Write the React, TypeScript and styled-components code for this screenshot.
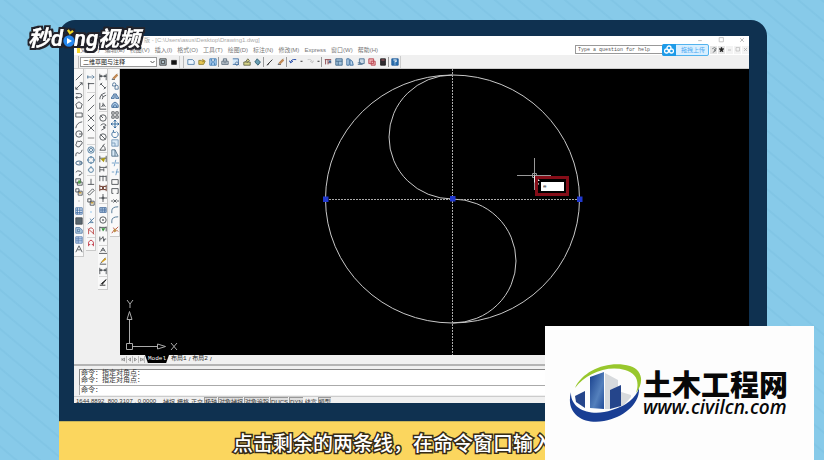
import React from "react";
import styled, { createGlobalStyle } from "styled-components";

const GlobalStyle = createGlobalStyle`
  *, *::before, *::after { box-sizing: border-box; }
  body { margin: 0; font-family: "Liberation Sans", "Noto Sans CJK SC", sans-serif; }
  button, input, select { font: inherit; color: inherit; margin: 0; padding: 0; border: 0; background: none; border-radius: 0; }
`;

const Page = styled.main`
  position: relative;
  display: flex;
  flex-direction: column;
  min-height: 100vh;
  padding: 20px 57px 0 59px;
  overflow: hidden;
  background:
    repeating-linear-gradient(40deg, rgba(70, 150, 190, 0) 0 9px, rgba(70, 150, 190, 0.09) 10px 11px, rgba(70, 150, 190, 0) 12px 15px),
    #87cae9;
`;

const Monitor = styled.section`
  flex: 1;
  display: flex;
  padding: 16px 18px 18px 15px;
  border-radius: 16px 16px 0 0;
  background: #0f3150;
`;

const AppWindow = styled.div`
  flex: 1;
  min-width: 0;
  display: flex;
  flex-direction: column;
  overflow: hidden;
  background: #f0f0f0;
  font-size: 6px;
  line-height: 8px;
`;

const TitleBar = styled.header`
  display: flex;
  align-items: center;
  height: 8px;
  padding-left: 70px;
  background: #fff;
  color: #aaa;
  white-space: nowrap;
`;

const WindowButtons = styled.div`
  display: flex;
  gap: 11px;
  margin-left: auto;
  padding-right: 2px;
  color: #999;
`;

const SmallButton = styled.button`
  display: grid;
  place-items: center;
  width: 10px;
  height: 8px;
`;

const MenuBar = styled.nav`
  display: flex;
  align-items: center;
  height: 11px;
  padding-left: 3px;
  gap: 5px;
  background: #fff;
  color: #777;
`;

const MenuItem = styled.button`
  white-space: nowrap;
`;

const MenuMark = styled.span`
  width: 3px;
  height: 6px;
  margin-right: -5px;
  background: #f6d72c;
`;

const HelpArea = styled.div`
  display: flex;
  align-items: center;
  margin-left: auto;
`;

const HelpInput = styled.input`
  width: 87px;
  height: 9px;
  padding-left: 2px;
  border: 1px solid #999;
  border-right: 0;
  background: #fff;
  color: #555;
  font-family: "Liberation Mono", monospace;
  font-size: 5px;
  &::placeholder { color: #555; opacity: 1; }
`;

const UploadButton = styled.button`
  display: flex;
  align-items: center;
  width: 47px;
  height: 12px;
  border: 1px solid #53b3ee;
  border-radius: 2px;
  background: #d8efff;
  color: #51aaf2;
  white-space: nowrap;
`;

const UploadMark = styled.span`
  display: grid;
  place-items: center;
  width: 14px;
  height: 12px;
  margin: -1px 5px -1px -1px;
  border-radius: 2px 0 0 2px;
  background: #1e9be8;
`;

const UtilityButton = styled(SmallButton)<{ $boxed?: boolean }>`
  width: 7px;
  margin-left: 1px;
  background: ${(p) => (p.$boxed ? "#e6e6e6" : "#f3f3f3")};
`;

const ToolBar = styled.div`
  display: flex;
  align-items: center;
  height: 14px;
  padding-left: 4px;
  border-bottom: 1px solid #ccc;
`;

const ToolGroup = styled.div`
  display: flex;
  align-items: center;
  height: 12px;
  padding-left: 1px;
  border-left: 1px solid #bbb;
  border-right: 1px solid #ccc;
  margin-right: 3px;
`;

const WorkspaceSelect = styled.select`
  appearance: none;
  width: 77px;
  height: 10px;
  padding-left: 2px;
  border: 1px solid #999;
  background: #fff url("data:image/svg+xml,%3Csvg xmlns='http://www.w3.org/2000/svg' width='5' height='4'%3E%3Cpath d='M.5 1l2 2 2-2' fill='none' stroke='%23555'/%3E%3C/svg%3E") no-repeat right 1px center;
  color: #222;
`;

const ToolButton = styled.button<{ $narrow?: boolean }>`
  display: grid;
  place-items: center;
  flex: none;
  width: ${(p) => (p.$narrow ? "6px" : "11px")};
  height: 10px;
`;

const Divider = styled.span`
  width: 1px;
  height: 10px;
  background: #999;
`;

const Workspace = styled.div`
  flex: 1;
  display: flex;
  min-height: 0;
`;

const ToolRail = styled.aside`
  display: flex;
  align-items: flex-start;
  gap: 2px;
  width: 46px;
  flex: none;
`;

const RailColumn = styled.div<{ $height: number }>`
  display: flex;
  flex-direction: column;
  justify-content: space-between;
  align-items: center;
  width: 10px;
  height: ${(p) => p.$height}px;
  padding: 3px 0 2px;
  border: solid #c9c9c9;
  border-width: 0 1px 1px 0;
  background: #f9f9f9;
`;

const RailButton = styled.button`
  display: grid;
  place-items: center;
  width: 9px;
  height: 9px;
`;

const RailGap = styled.span`
  width: 8px;
  height: 1px;
  background: #d5d5d5;
`;

const DrawingColumn = styled.div`
  flex: 1;
  min-width: 0;
  display: flex;
  flex-direction: column;
`;

const Canvas = styled.div`
  position: relative;
  flex: 1;
  min-height: 0;
  background: #000;
`;

const Drawing = styled.svg`
  display: block;
  width: 100%;
  height: 100%;
`;

const CommandPrompt = styled.div`
  position: absolute;
  left: 415px;
  top: 107px;
  display: flex;
  width: 34px;
  height: 20px;
  padding: 3px 2px 2px 3px;
  border: 3px solid #850d18;
`;

const PromptInput = styled.input`
  width: 100%;
  min-width: 0;
  padding-left: 2px;
  background: #fff;
  color: #222;
  font-family: "Liberation Mono", monospace;
`;

const TabRow = styled.div`
  display: flex;
  align-items: center;
  height: 8px;
  padding-left: 1px;
  color: #222;
`;

const StepButton = styled.button`
  width: 6px;
  height: 7px;
  border-right: 1px solid #bbb;
  display: grid;
  place-items: center;
`;

const LayoutTab = styled.button<{ $active?: boolean }>`
  height: 8px;
  padding: 0 ${(p) => (p.$active ? "3px" : "2px")};
  white-space: nowrap;
  background: ${(p) => (p.$active ? "#000" : "none")};
  color: ${(p) => (p.$active ? "#fff" : "#222")};
  clip-path: ${(p) => (p.$active ? "polygon(0 0, 100% 0, 88% 100%, 12% 100%)" : "none")};
  font-family: "Liberation Mono", "Noto Sans CJK SC", monospace;
`;

const CommandPanel = styled.section`
  margin-top: 1px;
  padding: 3px 0 1px 5px;
  border-top: 2px solid #b4b4b4;
  color: #333;
  font-family: "Liberation Mono", "Noto Sans CJK SC", monospace;
  font-size: 7px;
  line-height: 7px;
`;

const CommandLog = styled.div`
  padding: 0 0 1px 1px;
  border: solid #888;
  border-width: 1px 0 0 1px;
  background: #fff;
`;

const CommandLine = styled.label`
  display: flex;
  align-items: center;
  height: 10px;
  padding-left: 1px;
  border: solid #aaa;
  border-width: 1px 0 0 1px;
  background: #fff;
`;

const CommandInput = styled.input`
  flex: 1;
  min-width: 0;
  height: 7px;
`;

const StatusBar = styled.footer`
  display: flex;
  align-items: flex-start;
  height: 7px;
  overflow: hidden;
  padding-left: 2px;
  border-top: 1px solid #ccc;
  color: #333;
  white-space: nowrap;
  gap: 1px;
`;

const Coordinates = styled.span`
  width: 85px;
`;

const StatusToggle = styled.button<{ $on?: boolean }>`
  flex: none;
  height: 9px;
  border: solid ${(p) => (p.$on ? "#999" : "#f0f0f0")};
  border-width: 1px 0 0 1px;
  background: ${(p) => (p.$on ? "#dedede" : "none")};
`;

const Caption = styled.p`
  margin: 0;
  height: 39px;
  padding-left: 174px;
  border-top: 1px solid #c6b45b;
  background: #fbd65e;
  color: #fff;
  font-family: "Noto Sans CJK SC", sans-serif;
  font-size: 20px;
  font-weight: 500;
  line-height: 41px;
  white-space: nowrap;
  -webkit-text-stroke: 3px #352a16;
  paint-order: stroke fill;
`;

const VideoLogo = styled.svg`
  position: absolute;
  left: 16px;
  top: 12px;
`;

const SiteCard = styled.aside`
  position: absolute;
  right: 10px;
  bottom: 0;
  display: flex;
  align-items: center;
  width: 269px;
  height: 134px;
  padding-left: 23px;
  background: #fdfdfd;
`;

const SiteLink = styled.a`
  display: flex;
  align-items: center;
  text-decoration: none;
`;

const SiteWords = styled.span`
  display: flex;
  flex-direction: column;
  color: #080808;
  white-space: nowrap;
`;

const SiteName = styled.strong`
  font-family: "Noto Sans CJK SC", sans-serif;
  font-size: 29px;
  font-weight: 900;
  line-height: 28px;
`;

const SiteAddress = styled.span`
  font-family: "Open Sans", "Noto Sans", sans-serif;
  font-size: 19px;
  font-style: italic;
  font-weight: 600;
  line-height: 20px;
`;

type GlyphShape = { d: string; fill?: string; stroke?: string; extra?: string; extraColor?: string };

const glyphs: Record<string, GlyphShape> = {
  line: { d: "M1 9 9 1" },
  ray: { d: "M1 9 9 1M1 9V6M1 9h3M9 1v3M9 1H6" },
  arcLine: { d: "M1 2h5a2.5 2.5 0 0 1 0 5H1M1 7l2-2M1 7l2 2" },
  polygon: { d: "M5 1 9 4 7.5 9h-5L1 4Z" },
  rect: { d: "M1 2.5h8v5H1Z" },
  arc: { d: "M1 9Q2 2 9 1" },
  circle: { d: "M9 5A4 4 0 1 1 5 1a4 4 0 0 1 4 4M5 5h4" },
  cloud: { d: "M2 8Q0 6 2 4 2 0 5 2 8 0 9 3 9 6 7 6 6 10 2 8" },
  spline: { d: "M1 9Q1 3 4 5T9 1" },
  ellipse: { d: "M9 5A4 2.5 0 1 1 1 5a4 2.5 0 0 1 8 0M5 5h4", stroke: "#31597b" },
  ellipseArc: { d: "M1 4Q3 1 7 3 11 6 5 8M5 8l2-2" },
  insert: { d: "M1 1h6v5H1ZM3 5h6v4H3Z", extra: "M4 3h3v4H4Z", extraColor: "#4fa343" },
  block: { d: "M1 1h4v4H1ZM4 4h5v5H4Z", extra: "M5 5h3v2H5Z", extraColor: "#c19d43" },
  point: { d: "M4.5 5h1" },
  hatch: { d: "M1 1h8v8H1ZM1 4h8M1 7h8M3 1v8M6 1v8", stroke: "#4773aa" },
  gradient: { d: "M1 1h8v8H1Z", fill: "#596770" },
  region: { d: "M1 2h5l3 3v4H1ZM3 4h3v3H3Z", fill: "#b9d5e8", stroke: "#5579a3" },
  table: { d: "M1 1h8v8H1ZM1 3.5h8M1 6h8M4 1v8", fill: "#c5daf5", stroke: "#5c7fb1" },
  text: { d: "M1 9 5 1 9 9M3 6h4" },
  track: { d: "M0 5h6M1 3v4M6 3l3 2-3 2", stroke: "#537896" },
  corner: { d: "M2 9V2h7M1 2h2M2 1v2" },
  cross: { d: "M1 1l8 8M9 1 1 9" },
  dash: { d: "M1 5h8", stroke: "#777" },
  target: { d: "M9 5a4 4 0 1 1-8 0 4 4 0 0 1 8 0M7 5a2 2 0 1 1-4 0 2 2 0 0 1 4 0", stroke: "#48779c" },
  quad: { d: "M9 5a4 4 0 1 1-8 0 4 4 0 0 1 8 0M5 0v3M5 7v3M0 5h3M7 5h3", stroke: "#48779c" },
  tangent: { d: "M8 5a3 3 0 1 1-6 0 3 3 0 0 1 6 0M5 0v2M1 5h1", stroke: "#48779c" },
  perp: { d: "M1 8h8M5 8V1" },
  parallel: { d: "M1 7 7 1M3 9 9 3M1 7l2 2M7 1l2 2" },
  node: { d: "M4 5h2", stroke: "#70b5e9" },
  near: { d: "M1 9 9 1M4 2l3 5M3 7h5", stroke: "#547da0" },
  none: { d: "M2 9V3q3-4 6 0v6M1 2l8 7", stroke: "#b44" },
  magnet: { d: "M2 9V4q3-5 6 0v5M2 7h2M6 7h2", stroke: "#bd2f3d" },
  dimension: { d: "M1 1v8M9 1v8M1 4h8M1 4l2-1v2ZM9 4 7 3v2Z" },
  aligned: { d: "M2 2l6 6M1 4l3-3M6 9l3-3" },
  arcDim: { d: "M1 9Q1 3 8 1M4 9q0-4 5-5M3 3l2 3" },
  ordinate: { d: "M1 1v8h8M3 6l3-3 2 3M5 1v5" },
  radius: { d: "M9 5a4 4 0 1 1-8 0 4 4 0 0 1 8 0M5 5 2 2" },
  jog: { d: "M2 3q4-4 7 0L5 5l3 1-5 3" },
  diameter: { d: "M9 5a4 4 0 1 1-8 0 4 4 0 0 1 8 0M2 2l6 6" },
  angle: { d: "M8 9H1L7 1M5 3q3 2 3 6" },
  quick: { d: "M1 1v8M9 1v8M1 4h8", extra: "M2 5l6-2-2 6Z", extraColor: "#ac9b12" },
  baseline: { d: "M1 1v8M1 3h8M1 6h5M9 1v3M6 4v4" },
  continued: { d: "M1 2v7M5 2v7M9 2v7M1 3h8" },
  space: { d: "M1 1v8M9 1v8M1 3h8M1 7h8M3 3l4 4M3 7l4-4", stroke: "#653326" },
  center: { d: "M5 0v10M0 5h10M4 4h2v2H4Z" },
  tolerance: { d: "M1 2h8v6H1ZM1 5h8M4 2v6M7 2v6", fill: "#a9c3de", stroke: "#5578a4" },
  centerMark: { d: "M9 5a4 4 0 1 1-8 0 4 4 0 0 1 8 0M5 4v2M4 5h2" },
  inspect: { d: "M1 2v6M9 2v6M1 3h8", extra: "M3 4h5L5 8Z", extraColor: "#31943a" },
  jogLine: { d: "M1 2v6M1 5h2l2-3 1 6 1-3h2" },
  dimEdit: { d: "M2 6 5 1l3 5M3 4h4M0 8h10" },
  edit: { d: "M1 9h8M2 8 8 1", extra: "M3 6 8 1l1 2-5 4Z", extraColor: "#d5a020" },
  brushDark: { d: "M1 9h7M3 7l1 1 5-6Z", fill: "#222", stroke: "#222" },
  erase: { d: "M2 7 8 1M1 8h4", extra: "M2 6 7 1l2 2-5 5Z", extraColor: "#c28a55" },
  copy: { d: "M2 3a2 2 0 1 1 4 0v2H2ZM5 6a2 2 0 1 1 4 0v3H5Z", stroke: "#4d7296" },
  mirror: { d: "M4 2v6H0ZM6 2v6h4Z", fill: "#a9c8e5", stroke: "#426a97" },
  offset: { d: "M1 8V5q4-7 8 0v3ZM3 8V6q2-3 4 0v2", fill: "#a9c8e5", stroke: "#426a97" },
  array: { d: "M1 1h3v3H1ZM6 1h3v3H6ZM1 6h3v3H1ZM6 6h3v3H6Z" },
  move: { d: "M5 0v10M0 5h10M3.5 2 5 0l1.5 2M3.5 8 5 10 6.5 8M2 3.5 0 5l2 1.5M8 3.5 10 5 8 6.5", stroke: "#246095" },
  rotate: { d: "M3 2a4 4 0 1 0 4 0M3 0v3h3", stroke: "#386b9b" },
  scale: { d: "M1 1h8v8H1ZM1 5h4v4", fill: "#d9e9f6", stroke: "#7799b8" },
  stretch: { d: "M1 1h4v8H1ZM5 1l4 8H5", fill: "#d9e9f6", stroke: "#526f87" },
  trim: { d: "M1 5h3M6 5h4M6 1 4 9", stroke: "#6799c4" },
  extend: { d: "M1 5h3M6 5h4M8 1 6 9", stroke: "#6799c4" },
  breakRect: { d: "M3 8H1V2h8v6H7" },
  breakPoint: { d: "M1 2h8v6H1Z" },
  join: { d: "M0 5h3M7 5h3M3 3l2 2-2 2M7 3 5 5l2 2" },
  fillet: { d: "M1 9V6q0-5 8-5", stroke: "#446d8d" },
  explode: { d: "M1 9 4 5M5 5 9 1M3 2l3 5M7 5l2 2", stroke: "#b64934", extra: "M3 5l3-2 1 3-3 2Z", extraColor: "#bd9448" },
  gear: { d: "M1 1h8v8H1ZM3 3h4v4H3Z", fill: "#aebfc9", stroke: "#444" },
  save2: { d: "M2 3h6v5H2Z", fill: "#111", stroke: "#333" },
  sheet: { d: "M1 2h6l2 2v4H1Z", fill: "#eef7ff", stroke: "#527ea8" },
  open: { d: "M1 3h3l1 1h4L7 8H1Z", fill: "#e6c652", stroke: "#8d8238", extra: "M5 1l4 2-3 3Z", extraColor: "#b0902c" },
  disk: { d: "M1 1h8v8H1ZM3 1v3h4V1M3 9V6h4v3", fill: "#b9dbfa", stroke: "#417cb3" },
  print: { d: "M3 4V1h4v3M1 4h8v4H1ZM3 6h4", fill: "#c6ced6", stroke: "#5d6d7c" },
  preview: { d: "M1 1h7v7H1M6 5a2 2 0 1 0 .1 0M8 8l1 1", fill: "#d4e8f8", stroke: "#436fa0" },
  plot: { d: "M1 5h8v4H1ZM3 5l3-4 2 2-3 3", fill: "#d7d487", stroke: "#65664a" },
  web: { d: "M1 5l3-4 4 4-3 4Z", fill: "#689eb3", stroke: "#315d6e" },
  pencil: { d: "M2 8 8 2M1 9l3-2", stroke: "#222" },
  undo: { d: "M2 6q0-5 7-4M2 6 0 3M2 6l3-2", stroke: "#143da2" },
  redo: { d: "M8 6Q8 1 2 2M8 6l2-3M8 6 5 4", stroke: "#c4c4c4" },
  drop: { d: "M3 4h4L5 6Z", fill: "#555", stroke: "#555" },
  match: { d: "M1 2h8M2 2v6M5 2v6M5 6h4", stroke: "#873f45", extra: "M6 3h3v3H6Z", extraColor: "#416896" },
  palette: { d: "M1 1h8v8H1ZM1 4h8M4 4v5", fill: "#a5c4dd", stroke: "#406789" },
  design: { d: "M1 1h3v8H1ZM5 2q4 1 4 7H5Z", fill: "#bdd7ed", stroke: "#396b9c" },
  sheetSet: { d: "M3 1h6v6H3ZM1 8h6M1 6h4", fill: "#cbd9e5", stroke: "#4b7192" },
  markup: { d: "M1 1h6v6H1ZM4 4h5v5H4Z", fill: "#efb6b6", stroke: "#ba4552" },
  calc: { d: "M2 1h6v8H2Z", fill: "#322d32", stroke: "#222", extra: "M3 2h4v1H3Z", extraColor: "#cb6470" },
  help: { d: "M1 1h8v8H1Z", fill: "#2c70ae", stroke: "#235f9d", extra: "M3 2h4v3H5.5v1h-1V4H6V3H3ZM4.5 7h1v1h-1Z", extraColor: "#fff" },
  minimize: { d: "M2 6h6", stroke: "#999" },
  maximize: { d: "M2 1h7v7H2Z", stroke: "#aaa" },
  close: { d: "M2 2l6 6M8 2 2 8", stroke: "#999" },
  star: { d: "M5 0l1.5 3.5H10L7 6l1 4-3-2-3 2 1-4L0 3.5h3.5Z", fill: "#222", stroke: "#222" },
  prev: { d: "M7 2 3 5l4 3Z", stroke: "#555" },
  next: { d: "M3 2l4 3-4 3Z", stroke: "#555" },
  first: { d: "M7 2 3 5l4 3ZM2 2v6", stroke: "#555" },
  last: { d: "M3 2l4 3-4 3ZM8 2v6", stroke: "#555" },
};

function Glyph({ name, size = 8 }: { name: string; size?: number }) {
  const shape = glyphs[name];
  return (
    <svg width={size} height={size} viewBox="0 0 10 10" aria-hidden="true">
      <path d={shape.d} fill={shape.fill ?? "none"} stroke={shape.stroke ?? "#4a4f53"} strokeWidth="1.1" />
      {shape.extra && <path d={shape.extra} fill={shape.extraColor} />}
    </svg>
  );
}

const railColumns = [
  { height: 188, tools: "line ray arcLine polygon rect arc circle cloud spline ellipse ellipseArc insert block point hatch gradient region table text" },
  { height: 182, tools: "track corner | line line cross cross dash | target quad tangent | perp parallel block node near none | magnet" },
  { height: 221, tools: "dimension aligned arcDim ordinate | radius jog diameter angle | quick baseline continued space center | tolerance centerMark inspect jogLine | dimEdit edit dimension | brushDark" },
  { height: 168, tools: "erase copy mirror offset array move rotate scale stretch trim extend breakPoint breakRect join fillet fillet explode" },
];

const standardTools = "sheet open disk | print preview plot web | pencil erase | undo drop redo drop | match palette design sheetSet markup calc | help".split(" ");
const menus = ["文件(F)", "编辑(E)", "视图(V)", "插入(I)", "格式(O)", "工具(T)", "绘图(D)", "标注(N)", "修改(M)", "Express", "窗口(W)", "帮助(H)"];
const toggles: [string, boolean][] = [
  ["捕捉", false], ["栅格", false], ["正交", false], ["极轴", true], ["对象捕捉", true],
  ["对象追踪", true], ["DUCS", true], ["DYN", true], ["线宽", false], ["模型", true],
];

function DrawingView() {
  return (
    <Canvas>
      <Drawing viewBox="120 69 629 286" preserveAspectRatio="xMinYMin meet" role="img" aria-label="CAD drawing">
        <g fill="none" stroke="#c8c8c8" strokeWidth="1">
          <ellipse cx="452.5" cy="199" rx="127" ry="124" />
          <path d="M452.5 75A63.5 62 0 0 0 452.5 199A63.5 62 0 0 1 452.5 323" />
          <path d="M452.5 69V355M326 199.5H580" stroke="#aaa" strokeDasharray="2 1" />
          <path d="M517 175.5h34M534.5 158v32M532.5 173.5h4v4h-4Z" stroke="#999" />
          <path d="M129.5 343v-24M133 346.5h24M126.5 343.5h6v6h-6ZM127 319.5h5l-2.5-8ZM157.5 344v5l8-2.5Z" stroke="#aaa" />
          <path d="M127 300l3 4 3-4M130 304v4M171 343l6 7M177 343l-6 7" stroke="#aaa" />
        </g>
        <path d="M323 196.5h5.5v5.5H323ZM450 196h5.5v5.5H450ZM577 196.5h5.5v5.5H577Z" fill="#2038cf" />
        <path d="M534 175v8l2-2 2 4 1-1-2-3h3Z" fill="#eee" />
      </Drawing>
      <CommandPrompt>
        <PromptInput aria-label="Dynamic command" defaultValue="e" />
      </CommandPrompt>
    </Canvas>
  );
}

function Emblem() {
  return (
    <svg width="75" height="64" viewBox="0 0 75 64" aria-hidden="true">
      <defs>
        <linearGradient id="tower" x2="1" y2="1">
          <stop stopColor="#173f8c" />
          <stop offset=".6" stopColor="#5480bc" />
          <stop offset="1" stopColor="#214c99" />
        </linearGradient>
      </defs>
      <path d="M7 27C15 9 41-1 62 5 75 9 76 22 68 32 72 20 68 12 57 9 38 4 18 13 7 27Z" fill="#98c72d" />
      <path d="M3 31C2 49 24 56 44 49 58 45 68 37 71 27 72 43 56 56 36 60 16 64-3 53 3 31Z" fill="#193e94" />
      <path d="M37 12l13 7v11l13 4v2l-7 8-5 2V29l-9 5v14h-5Z" fill="#d7dadd" />
      <path d="M7 35l10-5v17L8 41Z" fill="#25458b" />
      <path d="M22 16l14-5v37l-14-1Z" fill="url(#tower)" />
      <path d="M42 29l11-5v21l-11 3Z" fill="#25458b" />
    </svg>
  );
}

function VideoBrand() {
  return (
    <VideoLogo width="136" height="50" viewBox="16 12 136 50" role="img" aria-label="秒dong视频">
      <defs>
        <filter id="outline" x="-10%" y="-20%" width="120%" height="140%">
          <feMorphology in="SourceAlpha" operator="dilate" radius="2" result="thick" />
          <feFlood floodColor="#24242b" />
          <feComposite in2="thick" operator="in" result="edge" />
          <feMerge>
            <feMergeNode in="edge" />
            <feMergeNode in="SourceGraphic" />
          </feMerge>
        </filter>
      </defs>
      <g filter="url(#outline)">
        <g fill="#fff" fontFamily="'Noto Sans CJK SC', sans-serif" fontStyle="italic" fontWeight="700">
          <text x="28" y="46" fontSize="22">秒</text>
          <text x="98" y="46" fontSize="21">视频</text>
        </g>
        <g fill="#fff" fontFamily="Roboto, sans-serif" fontStyle="italic" fontWeight="600" fontSize="22">
          <text x="51" y="46">d</text>
          <text x="74" y="46">ng</text>
        </g>
        <circle cx="69" cy="41" r="5.5" fill="#2688ee" />
        <path d="M68 30l2 3 3-2" fill="none" stroke="#f4dc28" strokeWidth="2" />
      </g>
      <path d="M67 38v6l5-3Z" fill="#fff" />
    </VideoLogo>
  );
}

export default function App() {
  return (
    <>
      <GlobalStyle />
      <Page>
        <Monitor>
          <AppWindow>
            <TitleBar>
              版 - [C:\Users\asus\Desktop\Drawing1.dwg]
              <WindowButtons>
                {["minimize", "maximize", "close"].map((name) => (
                  <SmallButton key={name} aria-label={name}><Glyph name={name} size={6} /></SmallButton>
                ))}
              </WindowButtons>
            </TitleBar>
            <MenuBar>
              <MenuMark />
              {menus.map((name) => <MenuItem key={name}>{name}</MenuItem>)}
              <HelpArea>
                <HelpInput aria-label="Help question" placeholder="Type a question for help" />
                <UploadButton>
                  <UploadMark>
                    <svg width="10" height="9" viewBox="0 0 10 9" aria-hidden="true">
                      <path d="M5 1a2 2 0 1 1 0 4 2 2 0 0 1 0-4M2.5 4a2 2 0 1 1 0 4 2 2 0 0 1 0-4M7.5 4a2 2 0 1 1 0 4 2 2 0 0 1 0-4" fill="none" stroke="#fff" strokeWidth="1.3" />
                    </svg>
                  </UploadMark>
                  拖拽上传
                </UploadButton>
                <UtilityButton $boxed aria-label="Search"><Glyph name="jog" size={6} /></UtilityButton>
                <UtilityButton $boxed aria-label="Favorites"><Glyph name="star" size={5} /></UtilityButton>
                {["minimize", "maximize", "close"].map((name) => (
                  <UtilityButton key={name} aria-label={`${name} drawing`}><Glyph name={name} size={5} /></UtilityButton>
                ))}
              </HelpArea>
            </MenuBar>
            <ToolBar>
              <ToolGroup>
                <WorkspaceSelect aria-label="Workspace"><option>二维草图与注释</option></WorkspaceSelect>
                <ToolButton aria-label="Workspace settings"><Glyph name="gear" /></ToolButton>
                <ToolButton aria-label="My workspace"><Glyph name="save2" /></ToolButton>
              </ToolGroup>
              <ToolGroup>
                {standardTools.map((name, i) => name === "|"
                  ? <Divider key={i} />
                  : <ToolButton key={i} $narrow={name === "drop"} aria-label={name}><Glyph name={name} size={name === "drop" ? 5 : 8} /></ToolButton>)}
              </ToolGroup>
            </ToolBar>
            <Workspace>
              <ToolRail>
                {railColumns.map((column, c) => (
                  <RailColumn key={c} $height={column.height}>
                    {column.tools.split(" ").map((name, i) => name === "|"
                      ? <RailGap key={i} />
                      : <RailButton key={i} aria-label={name}><Glyph name={name} /></RailButton>)}
                  </RailColumn>
                ))}
              </ToolRail>
              <DrawingColumn>
                <DrawingView />
                <TabRow>
                  {["first", "prev", "next", "last"].map((name) => (
                    <StepButton key={name} aria-label={name}><Glyph name={name} size={5} /></StepButton>
                  ))}
                  <LayoutTab $active>Model</LayoutTab>
                  <LayoutTab>布局1</LayoutTab>/
                  <LayoutTab>布局2</LayoutTab>/
                </TabRow>
              </DrawingColumn>
            </Workspace>
            <CommandPanel>
              <CommandLog>
                <div>命令：指定对角点：</div>
                <div>命令：指定对角点：</div>
              </CommandLog>
              <CommandLine>命令：<CommandInput aria-label="命令" /></CommandLine>
            </CommandPanel>
            <StatusBar>
              <Coordinates>1644.8892, 800.3107 , 0.0000</Coordinates>
              {toggles.map(([name, on]) => <StatusToggle key={name} $on={on} aria-pressed={on}>{name}</StatusToggle>)}
            </StatusBar>
          </AppWindow>
        </Monitor>
        <Caption>点击剩余的两条线，在命令窗口输入</Caption>
        <VideoBrand />
        <SiteCard>
          <SiteLink href="http://www.civilcn.com">
            <Emblem />
            <SiteWords>
              <SiteName>土木工程网</SiteName>
              <SiteAddress>www.civilcn.com</SiteAddress>
            </SiteWords>
          </SiteLink>
        </SiteCard>
      </Page>
    </>
  );
}
